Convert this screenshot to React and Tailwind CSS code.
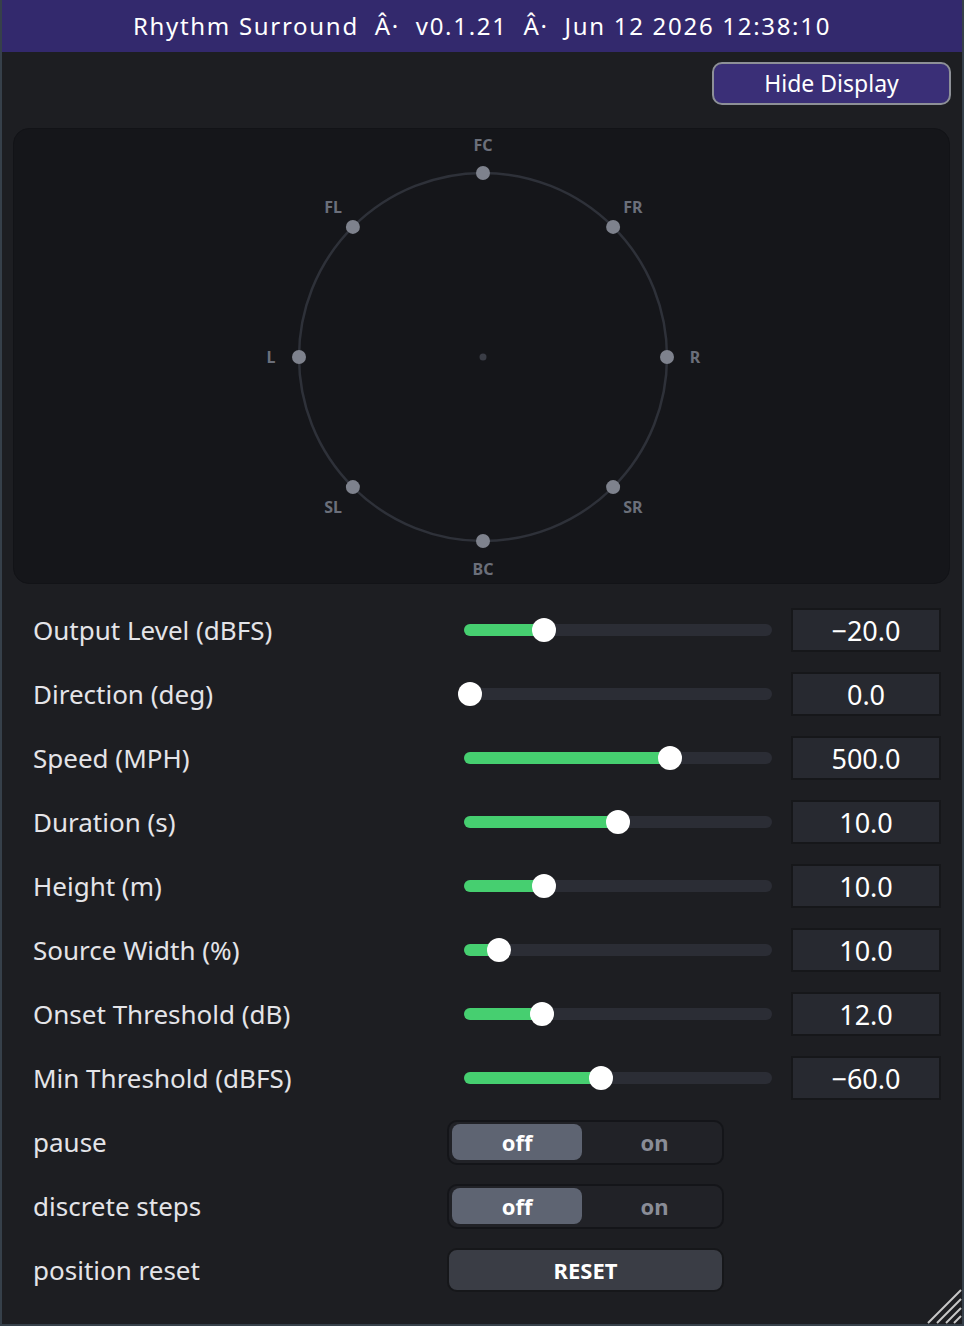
import React from "react";

const sliders = [
  { label: "Output Level (dBFS)", value: "\u221220.0", thumb: 544 },
  { label: "Direction (deg)", value: "0.0", thumb: 470 },
  { label: "Speed (MPH)", value: "500.0", thumb: 670 },
  { label: "Duration (s)", value: "10.0", thumb: 618 },
  { label: "Height (m)", value: "10.0", thumb: 544 },
  { label: "Source Width (%)", value: "10.0", thumb: 499 },
  { label: "Onset Threshold (dB)", value: "12.0", thumb: 542 },
  { label: "Min Threshold (dBFS)", value: "\u221260.0", thumb: 601 },
];

const speakers = [
  { name: "FC", a: 0 },
  { name: "FR", a: 45 },
  { name: "R", a: 90 },
  { name: "SR", a: 135 },
  { name: "BC", a: 180 },
  { name: "SL", a: 225 },
  { name: "L", a: 270 },
  { name: "FL", a: 315 },
];

function Display() {
  const cx = 469;
  const cy = 228;
  const r = 184;
  const lr = 212;
  return (
    <svg width="937" height="456" viewBox="0 0 937 456" className="block">
      <circle cx={cx} cy={cy} r={r} fill="none" stroke="#2e3139" strokeWidth="2.5" />
      <circle cx={cx} cy={cy} r="3.5" fill="#3a3d46" />
      {speakers.map((s) => {
        const rad = (s.a * Math.PI) / 180;
        const x = cx + r * Math.sin(rad);
        const y = cy - r * Math.cos(rad);
        const lx = cx + lr * Math.sin(rad);
        const ly = cy - lr * Math.cos(rad);
        return (
          <g key={s.name}>
            <circle cx={x} cy={y} r="7" fill="#7e828d" />
            <text
              x={lx}
              y={ly}
              textAnchor="middle"
              dominantBaseline="central"
              fill="#6b6f7a"
              fontSize="16"
              fontWeight="700"
              fontFamily="'Noto Sans', sans-serif"
            >
              {s.name}
            </text>
          </g>
        );
      })}
    </svg>
  );
}

function SliderRow({ label, value, thumb }) {
  const pos = thumb - 464;
  return (
    <div className="flex h-[64px] items-center pl-[31px]">
      <div className="w-[431px] text-[26px] leading-none text-[#e4e4e8]">{label}</div>
      <div className="relative flex h-[24px] w-[308px] items-center">
        <div className="h-[12px] w-full rounded-full bg-[#2b2d35]" />
        <div
          className="absolute left-0 top-[6px] h-[12px] rounded-full bg-[#46cf70]"
          style={{ width: pos }}
        />
        <div
          className="absolute top-0 h-[24px] w-[24px] rounded-full bg-white"
          style={{ left: pos - 12 }}
        />
      </div>
      <div className="ml-[19px] flex h-[44px] w-[150px] items-center justify-center border-2 border-[#16171a] bg-[#272930] text-[27px] leading-none text-white">
        {value}
      </div>
    </div>
  );
}

function ToggleRow({ label }) {
  return (
    <div className="flex h-[64px] items-center pl-[31px]">
      <div className="w-[414px] text-[26px] leading-none text-[#e4e4e8]">{label}</div>
      <div className="flex h-[45px] w-[277px] items-center rounded-[10px] border-2 border-[#141519] bg-[#212227] pl-[3px] pr-[3px]">
        <div className="flex h-[36px] w-[130px] items-center justify-center rounded-[8px] bg-[#5e6472] text-[22px] font-bold leading-none text-white">
          off
        </div>
        <div className="flex flex-1 items-center justify-center pl-[8px] text-[22px] font-bold leading-none text-[#8a8d97]">
          on
        </div>
      </div>
    </div>
  );
}

export default function App() {
  return (
    <div className="relative flex h-[1326px] w-[964px] flex-col border-x-2 border-b-2 border-[#36404a] bg-[#1d1e22] font-['Noto_Sans',sans-serif]">
      <div className="flex h-[52px] items-center justify-center whitespace-pre bg-[#33296d] text-[24px] tracking-[1.7px] text-white">
        {"Rhythm Surround  \u00C2\u00B7  v0.1.21  \u00C2\u00B7  Jun 12 2026 12:38:10"}
      </div>
      <div className="flex justify-end pr-[11px] pt-[10px]">
        <button className="flex h-[43px] w-[239px] items-center justify-center rounded-[10px] border-2 border-[#8d9097] bg-[#3a2f77] text-[23px] leading-none text-white">
          Hide Display
        </button>
      </div>
      <div className="ml-[11px] mt-[23px] h-[456px] w-[937px] overflow-hidden rounded-[16px] border border-[#121317] bg-[#15161a]">
        <Display />
      </div>
      <div className="mt-[14px] flex flex-col">
        {sliders.map((s) => (
          <SliderRow key={s.label} {...s} />
        ))}
        <ToggleRow label="pause" />
        <ToggleRow label="discrete steps" />
        <div className="flex h-[64px] items-center pl-[31px]">
          <div className="w-[414px] text-[26px] leading-none text-[#e4e4e8]">position reset</div>
          <button className="flex h-[44px] w-[277px] items-center justify-center rounded-[10px] border-2 border-[#16171a] bg-[#3a3d45] text-[22px] font-bold leading-none text-white">
            RESET
          </button>
        </div>
      </div>
      <svg
        className="absolute bottom-0 right-0"
        width="36"
        height="36"
        viewBox="0 0 36 36"
      >
        <line x1="2" y1="35" x2="35" y2="2" stroke="#c8c8c8" strokeWidth="2" />
        <line x1="11" y1="35" x2="35" y2="11" stroke="#c8c8c8" strokeWidth="2" />
        <line x1="20" y1="35" x2="35" y2="20" stroke="#c8c8c8" strokeWidth="2" />
        <line x1="28" y1="35" x2="35" y2="28" stroke="#c8c8c8" strokeWidth="2" />
      </svg>
    </div>
  );
}
